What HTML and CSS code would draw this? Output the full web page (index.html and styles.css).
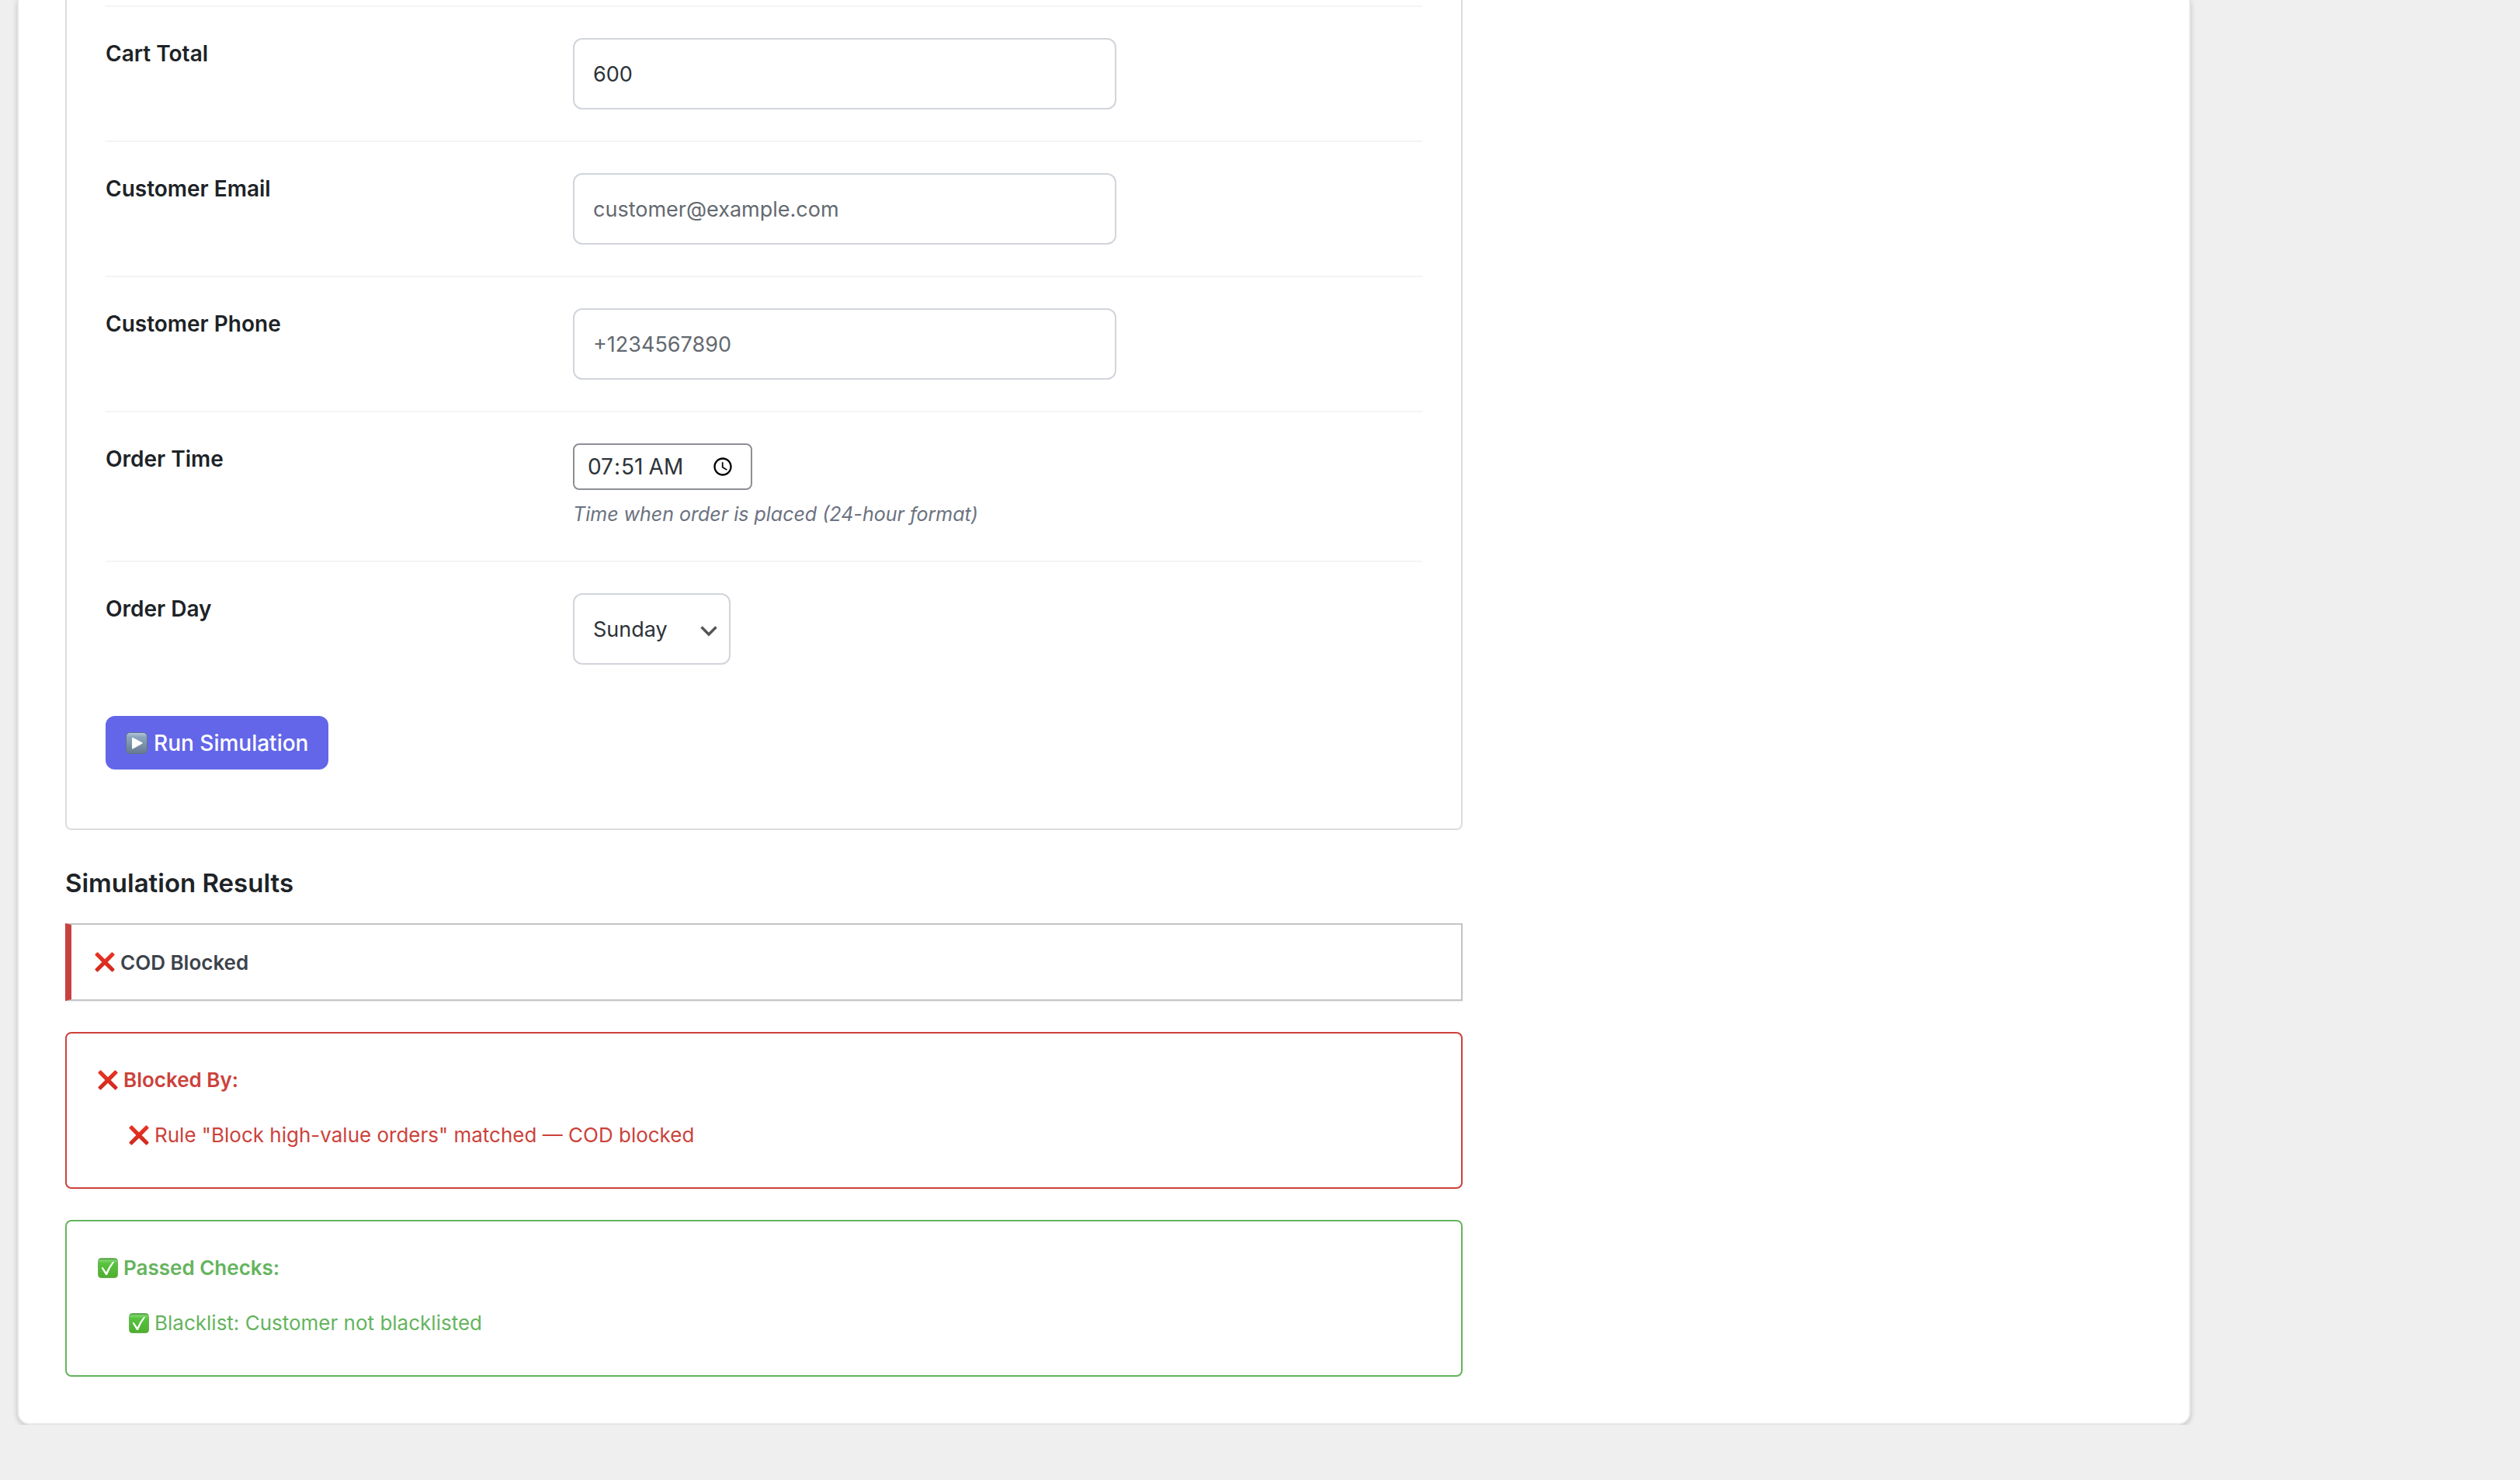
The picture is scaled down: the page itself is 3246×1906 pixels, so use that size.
FILE: index.html
```html
<!DOCTYPE html>
<html lang="en-US">
  <head>
    <meta charset="UTF-8" />
    <meta name="viewport" content="width=device-width, initial-scale=1.0" />
    <title>COD Simulator</title>
    <link rel="stylesheet" href="styles.css">
  </head>
  <body>
    <!-- Shared icons -->
    <svg class="sprite" aria-hidden="true">
      <defs>
        <linearGradient id="crossFill" x1="0" y1="0" x2="0" y2="1">
          <stop offset="0" stop-color="#ea3323" />
          <stop offset="1" stop-color="#cf2a1f" />
        </linearGradient>
        <linearGradient id="checkFill" x1="0" y1="0" x2="0" y2="1">
          <stop offset="0" stop-color="#4a9e3c" />
          <stop offset="0.12" stop-color="#7fd46c" />
          <stop offset="0.25" stop-color="#57c43e" />
          <stop offset="1" stop-color="#4fae2f" />
        </linearGradient>
        <linearGradient id="playFill" x1="0" y1="0" x2="0" y2="1">
          <stop offset="0" stop-color="#b9cbdb" />
          <stop offset="0.2" stop-color="#8da6c0" />
          <stop offset="1" stop-color="#667a90" />
        </linearGradient>
      </defs>
      <symbol id="cross" viewBox="0 0 26 26">
        <path fill="url(#crossFill)" d="M4.2.6 13 9.2 21.8.6Q22.5 0 23.2.7L25.3 2.8Q26 3.5 25.3 4.2L16.7 13 25.3 21.8Q26 22.5 25.3 23.2L23.2 25.3Q22.5 26 21.8 25.3L13 16.8 4.2 25.3Q3.5 26 2.8 25.3L.7 23.2Q0 22.5.7 21.8L9.3 13 .7 4.2Q0 3.5.7 2.8L2.8.7Q3.5 0 4.2.6Z" />
      </symbol>
      <symbol id="check" viewBox="0 0 26 26">
        <rect x="0.5" y="0.5" width="25" height="25" rx="4" fill="url(#checkFill)" stroke="#46942f" stroke-opacity="0.6" />
        <path fill="#fff" d="M4.6 12.8Q5.8 11.4 7 12.8L10.8 18.2Q14 11 18.8 5.2Q20 4.6 21.2 5.2Q15.6 12.4 12.2 21.4Q11 22.6 9.8 21.4Z" />
      </symbol>
      <symbol id="play" viewBox="0 0 28 28">
        <rect x="0.5" y="0.5" width="27" height="27" rx="5" fill="url(#playFill)" stroke="#5f7388" />
        <path fill="#fff" d="M8 7.6Q8 6.2 9.4 6.9L21.2 13.2Q22.2 14 21.2 14.7L9.4 21.3Q8 22 8 20.6Z" />
      </symbol>
    </svg>

    <main class="panel">
      <form class="card">
        <div class="form-row">
          <label for="cartTotal">Cart Total</label>
          <div class="field">
            <input class="text-input" type="text" id="cartTotal" value="600" />
          </div>
        </div>
        <div class="form-row">
          <label for="customerEmail">Customer Email</label>
          <div class="field">
            <input class="text-input" type="email" id="customerEmail" placeholder="customer@example.com" />
          </div>
        </div>
        <div class="form-row">
          <label for="customerPhone">Customer Phone</label>
          <div class="field">
            <input class="text-input" type="tel" id="customerPhone" placeholder="+1234567890" />
          </div>
        </div>
        <div class="form-row">
          <label for="orderTime">Order Time</label>
          <div class="field">
            <input class="time-input" type="time" id="orderTime" value="07:51" aria-describedby="timeHelp" />
            <p class="description" id="timeHelp">Time when order is placed (24-hour format)</p>
          </div>
        </div>
        <div class="form-row">
          <label for="orderDay">Order Day</label>
          <div class="field">
            <select class="select-input" id="orderDay">
              <option>Monday</option>
              <option>Tuesday</option>
              <option>Wednesday</option>
              <option>Thursday</option>
              <option>Friday</option>
              <option>Saturday</option>
              <option selected>Sunday</option>
            </select>
          </div>
        </div>
        <button class="run-button" type="button">
          <svg class="icon-play" aria-hidden="true"><use href="#play" /></svg>
          Run Simulation
        </button>
      </form>

      <h3 class="results-title">Simulation Results</h3>

      <div class="notice">
        <svg class="icon" aria-hidden="true"><use href="#cross" /></svg>
        <strong>COD Blocked</strong>
      </div>

      <section class="result blocked">
        <h4><svg class="icon" aria-hidden="true"><use href="#cross" /></svg>Blocked By:</h4>
        <ul>
          <li><svg class="icon" aria-hidden="true"><use href="#cross" /></svg>Rule "Block high-value orders" matched — COD blocked</li>
        </ul>
      </section>

      <section class="result passed">
        <h4><svg class="icon" aria-hidden="true"><use href="#check" /></svg>Passed Checks:</h4>
        <ul>
          <li><svg class="icon" aria-hidden="true"><use href="#check" /></svg>Blacklist: Customer not blacklisted</li>
        </ul>
      </section>
    </main>
  </body>
</html>
```

FILE: styles.css
```css
* {
  box-sizing: border-box;
}

body {
  margin: 0;
  padding: 0 22px;
  background: #efefef;
  color: #3c434a;
  font-family: Inter, "Liberation Sans", sans-serif;
  font-size: 26px;
  line-height: 39px;
}

.sprite {
  position: absolute;
  width: 0;
  height: 0;
}

.panel {
  max-width: 2800px;
  padding: 0 60px 60px;
  background: #fff;
  border: 2px solid #e5e5ea;
  border-top: 0;
  border-radius: 0 0 16px 16px;
  box-shadow: 0 2px 6px rgba(0, 0, 0, 0.2);
}

.card,
.notice,
.result {
  max-width: 1800px;
}

.card {
  padding: 7px 50px 76px;
  border: 2px solid #dcdcde;
  border-top: 0;
  border-radius: 0 0 8px 8px;
}

/* Form rows */
.form-row {
  display: grid;
  grid-template-columns: 602px 1fr;
  padding: 40px 0;
  border-top: 2px solid #f3f4f6;
}

.form-row label {
  color: #1d2327;
  font-size: 28px;
  font-weight: 600;
  line-height: 40px;
}

.text-input,
.time-input,
.select-input {
  display: block;
  margin: 0;
  background-color: #fff;
  color: #2c3338;
  font-family: inherit;
  font-size: 27px;
}

.text-input,
.select-input {
  height: 92px;
  padding: 0 24px;
  border: 2px solid #d1d5db;
  border-radius: 12px;
}

.text-input {
  width: 100%;
  max-width: 700px;
}

.text-input::placeholder {
  color: #646970;
}

.time-input {
  width: 231px;
  height: 60px;
  padding: 0 22px 0 16px;
  border: 2px solid #8c8f94;
  border-radius: 8px;
  font-size: 28px;
}

.time-input::-webkit-calendar-picker-indicator {
  width: 28px;
  height: 28px;
  padding: 0;
}

.select-input {
  width: 203px;
  appearance: none;
  background-image: url("data:image/svg+xml,%3Csvg xmlns='http://www.w3.org/2000/svg' viewBox='0 0 22 14'%3E%3Cpath d='M1.5 1.5l9.5 9.5 9.5-9.5' fill='none' stroke='%23555' stroke-width='3.4'/%3E%3C/svg%3E");
  background-repeat: no-repeat;
  background-position: right 15px top 40px;
  background-size: 22px 14px;
}

.description {
  margin: 12px 0 0;
  color: #6b7280;
  font-size: 25px;
  font-style: italic;
}

.run-button {
  display: flex;
  align-items: center;
  gap: 8px;
  height: 69px;
  margin-top: 26px;
  padding: 0 26px;
  background: #6366e8;
  border: 0;
  border-radius: 12px;
  color: #fff;
  font-family: inherit;
  font-size: 28px;
  font-weight: 500;
}

.icon-play {
  width: 28px;
  height: 28px;
}

/* Results */
.results-title {
  margin: 48px 0 32px;
  color: #1d2327;
  font-size: 33px;
  font-weight: 600;
  line-height: 40px;
}

.icon {
  flex: none;
  width: 26px;
  height: 26px;
}

.notice {
  display: flex;
  align-items: center;
  gap: 7px;
  height: 100px;
  padding: 0 30px;
  border: 2px solid #c3c4c7;
  border-left: 8px solid #c7423f;
  box-shadow: 0 2px 2px rgba(0, 0, 0, 0.04);
}

.notice strong {
  font-weight: 600;
}

.result {
  margin-top: 40px;
  padding: 40px 40px 48px;
  border: 2px solid;
  border-radius: 8px;
}

.result h4,
.result li {
  display: flex;
  align-items: center;
  gap: 7px;
}

.result h4 {
  margin: 0;
  font-size: 26px;
  font-weight: 600;
}

.result ul {
  margin: 32px 0 0;
  padding: 0 0 0 40px;
  list-style: none;
}

.blocked {
  border-color: #cc423b;
  color: #cc423b;
}

.passed {
  border-color: #64b45d;
  color: #64b45d;
}
```
